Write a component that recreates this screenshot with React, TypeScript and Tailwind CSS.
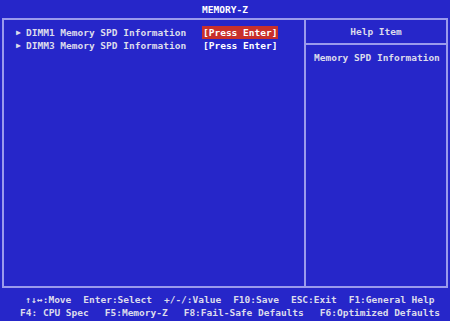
const LEFT_ROWS = [
  { label: 'DIMM1 Memory SPD Information', value: '[Press Enter]', active: true },
  { label: 'DIMM3 Memory SPD Information', value: '[Press Enter]', active: false },
];

const FOOTER_1 = ['↑↓↔:Move', 'Enter:Select', '+/-/:Value', 'F10:Save', 'ESC:Exit', 'F1:General Help'];
const FOOTER_2 = ['F4: CPU Spec', 'F5:Memory-Z', 'F8:Fail-Safe Defaults', 'F6:Optimized Defaults'];

export default function App() {
  return (
    <div
      className="w-[450px] h-[321px] bg-[#2626c9] text-[#dcdcec] font-bold text-[9.5px] leading-[13px] flex flex-col overflow-hidden"
      style={{ fontFamily: '"DejaVu Sans Mono", "Liberation Mono", monospace' }}
    >
      {/* Title */}
      <div className="h-[18px] flex items-center justify-center text-white">MEMORY-Z</div>

      {/* Main frame */}
      <div className="mx-[2px] h-[270px] border-2 border-[#9a9aec] flex">
        <div className="flex-1 pt-[6px] pl-[12px]">
          {LEFT_ROWS.map((r) => (
            <div key={r.label} className="flex items-center h-[13px]">
              <span className="w-[10px] text-[8px]">▶</span>
              <span className="w-[176px] whitespace-pre">{r.label}</span>
              <span
                className={
                  r.active
                    ? 'bg-[#c8302c] text-white px-[1px]'
                    : 'text-white px-[1px]'
                }
              >
                {r.value}
              </span>
            </div>
          ))}
        </div>
        <div className="w-[142px] border-l-2 border-[#9a9aec] flex flex-col">
          <div className="h-[25px] flex items-center justify-center border-b-2 border-[#9a9aec]">
            Help Item
          </div>
          <div className="pt-[6px] pl-[8px]">Memory SPD Information</div>
        </div>
      </div>

      {/* Footer */}
      <div className="flex-1 flex flex-col justify-center pt-[2px] pl-[10px]">
        <div className="flex justify-center gap-[12px] whitespace-pre">
          {FOOTER_1.map((t) => (
            <span key={t}>{t}</span>
          ))}
        </div>
        <div className="flex justify-center gap-[16px] whitespace-pre">
          {FOOTER_2.map((t) => (
            <span key={t}>{t}</span>
          ))}
        </div>
      </div>
    </div>
  );
}
